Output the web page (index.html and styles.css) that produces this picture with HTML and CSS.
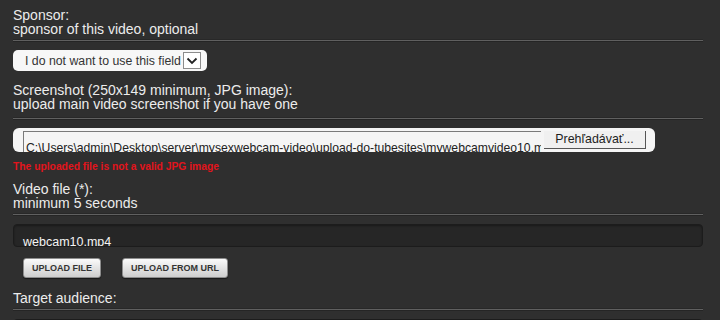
FILE: index.html
```html
<!DOCTYPE html>
<html lang="sk">
<head>
    <meta charset="UTF-8">
    <meta name="viewport" content="width=device-width, initial-scale=1.0">
    <title>Upload video</title>
    <link rel="stylesheet" href="styles.css">
</head>
<body>
    <div class="upload-form">
        <div class="field">
            <div class="label">Sponsor:<br>sponsor of this video, optional</div>
            <div class="separator"></div>
            <div class="select-box">
                <span class="select-text">I do not want to use this field</span>
                <span class="select-arrow">
                    <svg width="12" height="8" viewBox="0 0 12 8"><path d="M1.5 1.5 L6 6 L10.5 1.5" fill="none" stroke="#222" stroke-width="1.8"/></svg>
                </span>
            </div>
        </div>

        <div class="field field-screenshot">
            <div class="label">Screenshot (250x149 minimum, JPG image):<br>upload main video screenshot if you have one</div>
            <div class="separator"></div>
            <div class="file-box">
                <div class="file-path">C:\Users\admin\Desktop\server\mysexwebcam-video\upload-do-tubesites\mywebcamvideo10.mp4</div>
                <div class="file-button">Prehľadávať...</div>
            </div>
            <p class="error">The uploaded file is not a valid JPG image</p>
        </div>

        <div class="field field-video">
            <div class="label">Video file (*):<br>minimum 5 seconds</div>
            <div class="separator"></div>
            <div class="dark-input">webcam10.mp4</div>
            <div class="buttons">
                <button type="button">UPLOAD FILE</button>
                <button type="button">UPLOAD FROM URL</button>
            </div>
        </div>

        <div class="field field-audience">
            <div class="label">Target audience:</div>
            <div class="separator"></div>
            <div class="dark-input"></div>
        </div>
    </div>
</body>
</html>
```

FILE: styles.css
```css
body {
    margin: 0;
    background-color: #2f2f2f;
    color: #ececec;
    font-family: "Liberation Sans", Arial, sans-serif;
    font-size: 14px;
    overflow: hidden;
}

.upload-form {
    width: 690px;
    padding: 8px 0 0 13px;
}

.label {
    line-height: 14px;
}

.separator {
    height: 1px;
    margin: 4px 0 9px;
    background-color: #606060;
    box-shadow: 0 1px 0 #252525, 0 -1px 0 #282828;
}

/* select */
.select-box {
    display: flex;
    align-items: center;
    width: 182px;
    height: 21px;
    padding-left: 12px;
    background-color: #f7f7f7;
    border-radius: 5px;
}

.select-text {
    font-size: 12.3px;
    color: #343434;
}

.select-arrow {
    display: flex;
    align-items: center;
    justify-content: center;
    width: 16px;
    height: 15px;
    margin-left: 2px;
    border: 1px solid #8c8c8c;
    background-color: #fff;
}

.field-screenshot {
    margin-top: 12px;
}

.field-screenshot .separator {
    margin-top: 7px;
}

/* file input */
.file-box {
    display: flex;
    width: 632px;
    height: 21px;
    padding: 3px 0 0 10px;
    background-color: #f5f5f5;
    border-radius: 6px;
    overflow: hidden;
}

.file-path {
    width: 515px;
    height: 30px;
    padding: 9px 0 0 2px;
    border-top: 1px solid #7a7a7a;
    border-left: 1px solid #7a7a7a;
    font-size: 12.2px;
    color: #222;
    white-space: nowrap;
    overflow: hidden;
}

.file-button {
    width: 101px;
    height: 17px;
    margin-left: 3px;
    border-right: 1px solid #555;
    border-bottom: 1px solid #555;
    background-color: #f0f0f0;
    color: #1e1e1e;
    font-size: 12.4px;
    line-height: 16px;
    text-align: center;
}

.error {
    margin: 8px 0 0;
    font-size: 10.3px;
    font-weight: bold;
    line-height: 13px;
    color: #e2141c;
}

.field-video {
    margin-top: 9px;
}

/* dark text field */
.dark-input {
    box-sizing: border-box;
    height: 23px;
    padding: 10px 0 0 9px;
    background-color: #262626;
    border: 1px solid #1c1c1c;
    border-radius: 4px;
    box-shadow: inset 0 1px 2px rgba(0, 0, 0, 0.35);
    font-size: 12.5px;
    color: #f4f4f4;
    overflow: hidden;
}

.buttons {
    display: flex;
    gap: 21px;
    margin: 11px 0 0 10px;
}

.buttons button {
    height: 20px;
    padding: 0 8px;
    border: 1px solid #8d8d8d;
    border-radius: 3px;
    background: linear-gradient(#fafafa, #cdcdcd);
    box-shadow: 0 1px 1px rgba(0, 0, 0, 0.5);
    font-family: "Liberation Sans", Arial, sans-serif;
    font-size: 9px;
    font-weight: bold;
    color: #333;
}

.field-audience {
    margin-top: 13px;
}
```
